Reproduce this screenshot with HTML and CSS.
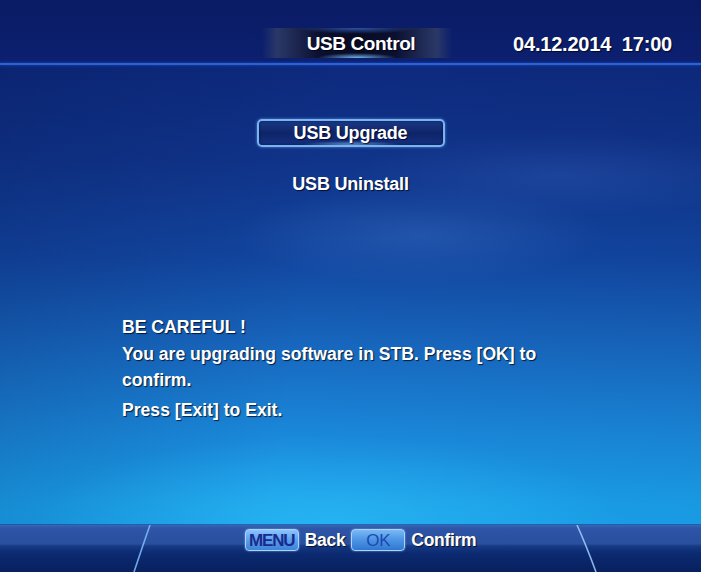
FILE: index.html
```html
<!DOCTYPE html>
<html>
<head>
<meta charset="utf-8">
<link rel="stylesheet" href="styles.css">
</head>
<body>
<div class="screen">
  <header class="top">
    <div class="title">USB Control</div>
    <div class="clock">04.12.2014&nbsp;&nbsp;17:00</div>
  </header>
  <div class="rule"></div>
  <nav class="menu">
    <div class="item active">USB Upgrade</div>
    <div class="item">USB Uninstall</div>
  </nav>
  <section class="msg">
    <p class="head">BE CAREFUL !</p>
    <p class="body">You are upgrading software in STB. Press [OK] to confirm.</p>
    <p class="exit">Press [Exit] to Exit.</p>
  </section>
  <footer class="bar">
    <svg class="edges" width="701" height="47" viewBox="0 0 701 47">
      <path d="M150 0 Q143 20 134 47" stroke="#7fc0ff" stroke-width="1.6" fill="none" opacity="0.85"/>
      <path d="M577 0 Q586 20 596 47" stroke="#9fd0ff" stroke-width="1.6" fill="none" opacity="0.85"/>
    </svg>
    <div class="hints">
      <span class="key menu-key">MENU</span>
      <span class="label">Back</span>
      <span class="key ok-key">OK</span>
      <span class="label">Confirm</span>
    </div>
  </footer>
</div>
</body>
</html>
```
FILE: styles.css
```css
html, body {
  margin: 0;
  padding: 0;
}
body {
  width: 701px;
  height: 572px;
  overflow: hidden;
  font-family: "Liberation Sans", Arial, sans-serif;
  color: #fff;
}
.screen {
  position: relative;
  width: 701px;
  height: 572px;
  display: flex;
  flex-direction: column;
  background:
    radial-gradient(ellipse 260px 70px at 420px 235px, rgba(90,150,230,0.22), rgba(90,150,230,0) 70%),
    radial-gradient(ellipse 300px 60px at 560px 175px, rgba(80,130,220,0.18), rgba(80,130,220,0) 70%),
    radial-gradient(ellipse 420px 120px at 330px 520px, rgba(60,210,255,0.35), rgba(60,210,255,0) 70%),
    linear-gradient(100deg, rgba(0,10,60,0.18) 0%, rgba(0,10,60,0) 45%, rgba(0,10,60,0.05) 100%),
    linear-gradient(180deg, #0c1f6e 0%, #0d2a7e 12%, #10348a 28%, #1246a0 45%, #1766bd 60%, #1a86d8 75%, #1aa0ea 88%, #1aa8f0 100%);
  text-shadow: 1px 1px 1px rgba(0,0,20,0.75);
}
.top {
  height: 63px;
  box-sizing: border-box;
  display: flex;
  align-items: flex-start;
  padding: 28px 29px 0 262px;
  background: linear-gradient(180deg, #0a1b64 0%, #0c2070 100%);
}
.title {
  width: 190px;
  height: 30px;
  line-height: 31px;
  text-align: center;
  padding-left: 8px;
  box-sizing: border-box;
  font-size: 19px;
  font-weight: bold;
  letter-spacing: -0.4px;
  background:
    radial-gradient(ellipse 40px 5px at 50% 100%, rgba(120,190,255,0.95), rgba(60,130,255,0) 100%),
    radial-gradient(ellipse 60px 6px at 50% 0%, rgba(70,130,255,0.6), rgba(60,130,255,0) 100%),
    linear-gradient(90deg, rgba(10,20,60,0) 0%, #2a3868 8%, #0b1030 30%, #070b22 50%, #0b1030 70%, #2a3868 92%, rgba(10,20,60,0) 100%);
}
.clock {
  margin-left: auto;
  font-size: 20px;
  font-weight: bold;
  line-height: 32px;
  letter-spacing: -0.2px;
}
.rule {
  height: 2px;
  background: #2a62da;
  box-shadow: 0 0 3px #1f4fc0;
}
.menu {
  display: flex;
  flex-direction: column;
  align-items: center;
  gap: 23px;
  margin-top: 54px;
}
.item {
  width: 188px;
  height: 28px;
  box-sizing: border-box;
  line-height: 28px;
  text-align: center;
  font-size: 18px;
  font-weight: bold;
  letter-spacing: -0.2px;
}
.item.active {
  border: 2px solid #78b4f0;
  border-radius: 5px;
  line-height: 24px;
  background:
    radial-gradient(ellipse 50px 4px at 50% 100%, rgba(140,200,255,0.8), rgba(140,200,255,0) 100%),
    linear-gradient(180deg, #1b3a86 0%, #0e2468 50%, #143080 100%);
  box-shadow: 0 0 3px rgba(120,180,255,0.7), inset 0 0 3px rgba(0,0,40,0.6);
}
.msg {
  margin-top: 116px;
  padding-left: 122px;
  width: 440px;
  font-size: 17.6px;
  font-weight: bold;
}
.msg p {
  margin: 0;
  line-height: 26px;
}
.msg .head {
  line-height: 27px;
}
.msg .exit {
  margin-top: 4px;
}
.bar {
  position: relative;
  margin-top: auto;
  height: 47px;
  background: linear-gradient(180deg, #3a64b4 0%, #2d54a6 8%, #29509e 40%, #163a84 45%, #0c2a72 60%, #08205e 100%);
  box-shadow: 0 -1px 0 rgba(20,60,140,0.6);
}
.edges {
  position: absolute;
  left: 0;
  top: 0;
}
.hints {
  position: relative;
  display: flex;
  justify-content: center;
  align-items: center;
  gap: 6px;
  padding: 4px 0 0 20px;
  font-weight: bold;
  font-size: 17.5px;
  letter-spacing: -0.3px;
}
.key {
  display: inline-block;
  height: 22px;
  line-height: 22px;
  box-sizing: border-box;
  border-radius: 4px;
  text-align: center;
  font-size: 17px;
  text-shadow: none;
  border: 1px solid #a8d4ff;
  box-shadow: 0 0 2px rgba(150,200,255,0.8);
}
.menu-key {
  width: 54px;
  color: #1a2a8c;
  letter-spacing: -1.2px;
  font-weight: bold;
  background: linear-gradient(180deg, #8cc4ff 0%, #5aa0ee 50%, #3d84d8 100%);
}
.ok-key {
  width: 54px;
  color: #1c48b0;
  font-weight: normal;
  background: linear-gradient(180deg, #7ab8f4 0%, #4f98e6 45%, #2f78d0 100%);
}
.label {
  color: #fff;
}
```
